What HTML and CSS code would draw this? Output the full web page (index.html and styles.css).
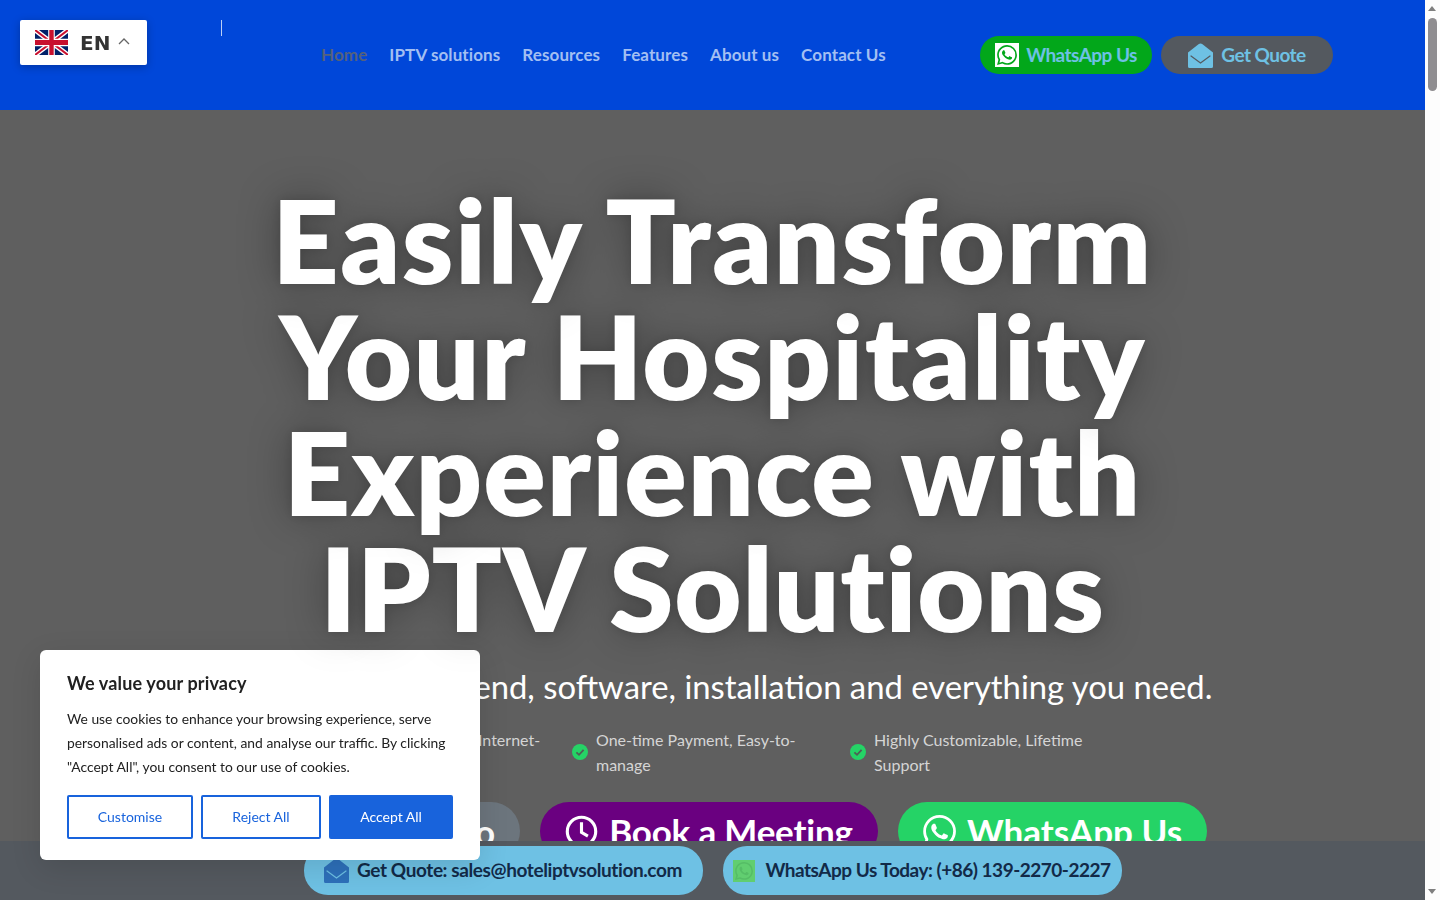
FILE: index.html
```html
<!DOCTYPE html>
<html>
<head lang="en">
    <meta charset="UTF-8">
    <title>Hotel IPTV Solution</title>
    <link rel="stylesheet" href="styles.css">
</head>
<body>
<svg class="defs" width="0" height="0">
    <symbol id="wa" viewBox="0 0 24 24">
        <path d="M17.472 14.382c-.297-.149-1.758-.867-2.03-.967-.273-.099-.471-.148-.67.15-.197.297-.767.966-.94 1.164-.173.199-.347.223-.644.075-.297-.15-1.255-.463-2.39-1.475-.883-.788-1.48-1.761-1.653-2.059-.173-.297-.018-.458.13-.606.134-.133.298-.347.446-.52.149-.174.198-.298.298-.497.099-.198.05-.371-.025-.52-.075-.149-.669-1.612-.916-2.207-.242-.579-.487-.5-.669-.51-.173-.008-.371-.01-.57-.01-.198 0-.52.074-.792.372-.272.297-1.04 1.016-1.04 2.479 0 1.462 1.065 2.875 1.213 3.074.149.198 2.096 3.2 5.077 4.487.709.306 1.262.489 1.694.625.712.227 1.36.195 1.871.118.571-.085 1.758-.719 2.006-1.413.248-.694.248-1.289.173-1.413-.074-.124-.272-.198-.57-.347m-5.421 7.403h-.004a9.87 9.87 0 01-5.031-1.378l-.361-.214-3.741.982.998-3.648-.235-.374a9.86 9.86 0 01-1.51-5.26c.001-5.45 4.436-9.884 9.888-9.884 2.64 0 5.122 1.03 6.988 2.898a9.825 9.825 0 012.893 6.994c-.003 5.45-4.437 9.884-9.885 9.884m8.413-18.297A11.815 11.815 0 0012.05 0C5.495 0 .16 5.335.157 11.892c0 2.096.547 4.142 1.588 5.945L.057 24l6.305-1.654a11.882 11.882 0 005.683 1.448h.005c6.554 0 11.89-5.335 11.893-11.893a11.821 11.821 0 00-3.48-8.413z"/>
    </symbol>
    <symbol id="envelope" viewBox="0 0 25 25">
        <path class="env_body" d="M0 9.5 10.5 1.2Q12.5 -.2 14.5 1.2L25 9.5V23.5A1.5 1.5 0 0 1 23.5 25H1.5A1.5 1.5 0 0 1 0 23.5Z"/>
        <path class="env_line" d="M3 13 12.5 20 22 13" fill="none" stroke-width="1.2" stroke-linecap="round"/>
    </symbol>
    <symbol id="check" viewBox="0 0 16 16">
        <circle cx="8" cy="8" r="8" fill="#25d366"/>
        <path d="M4.4 8.3 7 10.8 11.6 5.8" fill="none" stroke="#4f5f55" stroke-width="1.8"/>
    </symbol>
</svg>

<div class="page">
    <div class="main">
        <header class="header">
            <div class="logo"><span class="logo_tick"></span></div>
            <nav class="nav">
                <a class="active">Home</a>
                <a>IPTV solutions</a>
                <a>Resources</a>
                <a>Features</a>
                <a>About us</a>
                <a>Contact Us</a>
            </nav>
            <div class="head_btns">
                <a class="head_btn green">
                    <span class="wa_box"><svg><use href="#wa"/></svg></span>WhatsApp Us
                </a>
                <a class="head_btn grey">
                    <svg class="env env_light"><use href="#envelope"/></svg>Get Quote
                </a>
            </div>
        </header>

        <section class="hero">
            <h1>
                <span class="line1">Easily Transform</span>
                <span class="line2">Your Hospitality</span>
                <span class="line3">Experience with</span>
                <span class="line4">IPTV Solutions</span>
            </h1>
            <p class="sub">Get the IPTV headend, software, installation and everything you need.</p>
            <ul class="points">
                <li><svg><use href="#check"/></svg><span>Compatible with Most Internet-based TV</span></li>
                <li><svg><use href="#check"/></svg><span>One-time Payment, Easy-to-manage</span></li>
                <li><svg><use href="#check"/></svg><span>Highly Customizable, Lifetime Support</span></li>
            </ul>
            <div class="hero_btns">
                <a class="hero_btn gray">Watch Video</a>
                <a class="hero_btn purple">
                    <svg viewBox="0 0 36 36" fill="none" stroke="#fff" stroke-width="3.4"><circle cx="18" cy="18" r="15.5"/><path d="M18 8V19L25 23"/></svg>Book a Meeting
                </a>
                <a class="hero_btn wgreen">
                    <svg class="wa_white"><use href="#wa"/></svg>WhatsApp Us
                </a>
            </div>
        </section>

        <div class="bottom_bar">
            <a class="pill">
                <svg class="env env_dark"><use href="#envelope"/></svg>Get Quote: sales@hoteliptvsolution.com
            </a>
            <a class="pill pill_wa">
                <span class="wa_soft"><svg><use href="#wa"/></svg></span>WhatsApp Us Today: (+86) 139-2270-2227
            </a>
        </div>
    </div>

    <div class="scrollbar">
        <span class="arrow up"></span>
        <span class="thumb"></span>
        <span class="arrow down"></span>
    </div>
</div>

<div class="lang">
    <svg class="flag" viewBox="0 0 60 40" preserveAspectRatio="none">
        <rect width="60" height="40" fill="#012169"/>
        <path d="M0 0 60 40M60 0 0 40" stroke="#fff" stroke-width="8"/>
        <path d="M0 0 60 40M60 0 0 40" stroke="#c8102e" stroke-width="3.4"/>
        <path d="M30 0V40M0 20H60" stroke="#fff" stroke-width="12"/>
        <path d="M30 0V40M0 20H60" stroke="#c8102e" stroke-width="8"/>
    </svg>
    <b>EN</b>
    <svg class="chev" viewBox="0 0 12 8"><path d="M1 7 6 2 11 7" fill="none" stroke="#666" stroke-width="1.3"/></svg>
</div>

<div class="cookie">
    <h3>We value your privacy</h3>
    <p>We use cookies to enhance your browsing experience, serve personalised ads or content, and analyse our traffic. By clicking "Accept All", you consent to our use of cookies.</p>
    <div class="cookie_btns">
        <button class="outline custom">Customise</button>
        <button class="outline reject">Reject All</button>
        <button class="solid">Accept All</button>
    </div>
</div>
</body>
</html>
```

FILE: styles.css
```css
* {
    margin: 0;
    padding: 0;
    box-sizing: border-box;
}
body {
    font-family: "Lato", "Liberation Sans", sans-serif;
    overflow: hidden;
    background: #fff;
}
.defs {
    position: absolute;
}
.page {
    display: flex;
    height: 900px;
}
.main {
    width: 1425px;
    display: flex;
    flex-direction: column;
    height: 900px;
}

/* header */
.header {
    height: 110px;
    flex: none;
    background: #0047d9;
    display: flex;
    align-items: center;
    padding-left: 221px;
}
.logo {
    width: 100px;
    height: 70px;
    flex: none;
}
.logo_tick {
    display: block;
    width: 1px;
    height: 16px;
    background: #bcd0f5;
}
.nav {
    display: flex;
    gap: 22px;
    width: 659px;
    flex: none;
    font-size: 17px;
    font-weight: 700;
    letter-spacing: 0.1px;
    color: #a3bff2;
    padding-bottom: 2px;
}
.nav .active {
    color: #54617c;
}
.head_btns {
    display: flex;
    gap: 9px;
}
.head_btn {
    width: 172px;
    height: 38px;
    border-radius: 19px;
    display: flex;
    align-items: center;
    justify-content: center;
    font-size: 19px;
    font-weight: 700;
    letter-spacing: -0.55px;
    color: #6ec1e4;
    padding-bottom: 2px;
}
.green {
    background: #02a71a;
    gap: 7px;
}
.grey {
    background: #54595f;
    gap: 8px;
}
.wa_box {
    width: 24px;
    height: 24px;
    flex: none;
    margin-top: 2px;
    background: #fff;
    display: flex;
    align-items: center;
    justify-content: center;
}
.wa_box svg {
    width: 20px;
    height: 20px;
    fill: #02a71a;
}
.env {
    width: 25px;
    height: 25px;
    flex: none;
    margin-top: 2px;
}
.env_light {
    fill: #6ec1e4;
    stroke: #54595f;
}
.env_dark {
    fill: #2d70ba;
    stroke: #6ec1e4;
}
.env_body {
    stroke: none;
}

/* hero */
.hero {
    flex: 1;
    min-height: 0;
    overflow: hidden;
    background: #5f5f5f;
    text-align: center;
    color: #fff;
    padding-top: 72px;
}
.hero h1 {
    font-size: 116px;
    line-height: 116px;
    font-weight: 800;
    text-shadow: 0 0 12px rgba(0, 0, 0, 0.15), 0 0 40px rgba(0, 0, 0, 0.35);
}
/* upper lines sit on top so the next line's glow doesn't dim their descenders */
.hero h1 span {
    display: block;
    position: relative;
}
.line1 {
    letter-spacing: 1.6px;
    z-index: 4;
}
.line2 {
    letter-spacing: 1.4px;
    z-index: 3;
}
.line3 {
    letter-spacing: 1.05px;
    z-index: 2;
}
.line4 {
    letter-spacing: 0.75px;
    z-index: 1;
}
.sub {
    margin-top: 16px;
    padding-right: 4px;
    font-size: 32.8px;
    line-height: 50px;
}
.points {
    list-style: none;
    display: flex;
    justify-content: center;
    margin-top: 15px;
    padding-right: 3px;
    color: #d5d5d5;
    font-size: 16px;
    line-height: 25px;
    text-align: left;
}
.points li {
    width: 278px;
    display: flex;
    align-items: center;
    gap: 8px;
}
.points svg {
    width: 16px;
    height: 16px;
    flex: none;
}
.points span {
    width: 240px;
}
.hero_btns {
    display: flex;
    justify-content: center;
    gap: 20px;
    margin-top: 25px;
}
.hero_btn {
    height: 58px;
    border-radius: 29px;
    padding: 0 20px;
    display: flex;
    align-items: center;
    justify-content: flex-end;
    gap: 11px;
    font-size: 35px;
    font-weight: 700;
    color: #fff;
    white-space: nowrap;
    flex: none;
}
.hero_btn svg {
    width: 33px;
    height: 33px;
}
.gray {
    background: #6c757d;
    width: 302px;
    padding-right: 25px;
}
.purple {
    background: #6a0080;
    width: 338px;
    justify-content: center;
    letter-spacing: -0.2px;
}
.wgreen {
    background: #25d366;
    width: 309px;
    justify-content: center;
}
.wa_white {
    fill: #fff;
}

/* bottom bar */
.bottom_bar {
    height: 59px;
    flex: none;
    background: #54595f;
    display: flex;
    justify-content: center;
    gap: 20px;
    padding-top: 5px;
}
.pill {
    width: 399px;
    height: 49px;
    border-radius: 24px;
    background: #6ec1e4;
    color: #122a48;
    display: flex;
    align-items: center;
    justify-content: center;
    gap: 8px;
    font-size: 19px;
    font-weight: 700;
    letter-spacing: -0.4px;
    padding-bottom: 3px;
}
.pill .env {
    margin-top: 3px;
}
.pill_wa {
    gap: 10px;
    letter-spacing: -0.5px;
}
.wa_soft {
    width: 22px;
    height: 22px;
    flex: none;
    margin-top: 3px;
    background: #61ce70;
    display: flex;
    align-items: center;
    justify-content: center;
}
.wa_soft svg {
    width: 18px;
    height: 18px;
    fill: #55bd66;
}

/* fake scrollbar, same look as the browser one */
.scrollbar {
    width: 15px;
    height: 900px;
    background: #fdfdfd;
    position: relative;
}
.thumb {
    position: absolute;
    left: 3px;
    top: 18px;
    width: 9px;
    height: 73px;
    border-radius: 5px;
    background: #8f8d90;
}
.arrow {
    position: absolute;
    left: 3px;
    width: 0;
    height: 0;
    border-left: 4.5px solid transparent;
    border-right: 4.5px solid transparent;
}
.arrow.up {
    top: 6px;
    border-bottom: 5px solid #7f7f7f;
}
.arrow.down {
    bottom: 6px;
    border-top: 5px solid #7f7f7f;
}

/* language switcher */
.lang {
    position: fixed;
    left: 20px;
    top: 20px;
    width: 127px;
    height: 45px;
    background: #fff;
    border-radius: 2px;
    box-shadow: 0 2px 8px rgba(0, 0, 0, 0.25);
    display: flex;
    align-items: center;
    padding-left: 15px;
}
.flag {
    width: 33px;
    height: 25px;
}
.lang b {
    font-family: "DejaVu Sans", sans-serif;
    font-size: 20px;
    color: #333;
    margin-left: 12px;
}
.chev {
    width: 12px;
    height: 8px;
    margin-left: 8px;
    margin-top: -4px;
}

/* cookie box */
.cookie {
    position: fixed;
    left: 40px;
    top: 650px;
    width: 440px;
    height: 210px;
    background: #fff;
    border-radius: 6px;
    box-shadow: 0 8px 30px rgba(0, 0, 0, 0.12);
    padding: 22px 27px;
    color: #212121;
}
.cookie h3 {
    font-size: 18px;
    line-height: 22px;
    font-weight: 700;
    letter-spacing: 0.15px;
}
.cookie p {
    margin-top: 13px;
    font-size: 13.85px;
    line-height: 24px;
}
.cookie_btns {
    display: flex;
    gap: 8px;
    margin-top: 16px;
}
.cookie_btns button {
    height: 44px;
    border-radius: 2px;
    border: 2px solid #1863dc;
    font-family: inherit;
    font-size: 14px;
    color: #1863dc;
    background: #fff;
    padding-bottom: 2px;
}
.custom {
    width: 126px;
}
.reject {
    width: 120px;
}
.cookie_btns .solid {
    width: 124px;
    background: #1863dc;
    color: #fff;
}
```
